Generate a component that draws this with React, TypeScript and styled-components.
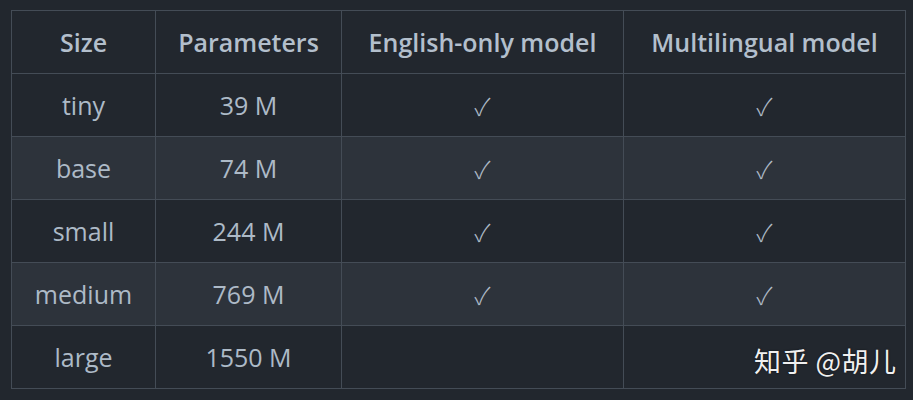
import React from "react";
import styled, { createGlobalStyle } from "styled-components";

const Global = createGlobalStyle`
  html, body { margin: 0; padding: 0; background: #22272e; }
  body { width: 913px; height: 400px; overflow: hidden; }
`;

const Page = styled.div`
  position: relative;
  width: 913px;
  height: 400px;
  box-sizing: border-box;
  padding: 10px 0 0 11px;
  background: #22272e;
  font-family: "Open Sans", "Noto Sans", sans-serif;
`;

const Table = styled.table`
  border-collapse: collapse;
  table-layout: fixed;
  width: 894px;
  color: #adbac7;
  font-size: 25px;
`;

const Row = styled.tr<{ $alt?: boolean }>`
  height: 63px;
  background: ${(p) => (p.$alt ? "#2d333b" : "#22272e")};
`;

const Head = styled.th`
  border: 1px solid #444c56;
  font-weight: 600;
  color: #b3bfcc;
  text-align: center;
  padding: 0 8px;
  white-space: nowrap;
`;

const Cell = styled.td`
  border: 1px solid #444c56;
  text-align: center;
  padding: 0 8px;
  white-space: nowrap;
`;

const Check = styled.span`
  font-family: "Noto Sans CJK SC", sans-serif;
  font-size: 24px;
  font-weight: 300;
  color: #adbac7;
`;

const Watermark = styled.div`
  position: absolute;
  left: 754px;
  top: 341px;
  font-family: "Noto Sans CJK SC", sans-serif;
  font-size: 27px;
  color: #f0f0f0;
  letter-spacing: 0.5px;
  text-shadow: 0 0 2px rgba(0, 0, 0, 0.6);
`;

const rows = [
  { size: "tiny", params: "39 M", en: true, multi: true },
  { size: "base", params: "74 M", en: true, multi: true },
  { size: "small", params: "244 M", en: true, multi: true },
  { size: "medium", params: "769 M", en: true, multi: true },
  { size: "large", params: "1550 M", en: false, multi: false },
];

export default function App() {
  return (
    <Page>
      <Global />
      <Table>
        <colgroup>
          <col style={{ width: 144 }} />
          <col style={{ width: 186 }} />
          <col style={{ width: 282 }} />
          <col style={{ width: 282 }} />
        </colgroup>
        <thead>
          <Row>
            <Head>Size</Head>
            <Head>Parameters</Head>
            <Head>English-only model</Head>
            <Head>Multilingual model</Head>
          </Row>
        </thead>
        <tbody>
          {rows.map((r, i) => (
            <Row key={r.size} $alt={i % 2 === 1}>
              <Cell>{r.size}</Cell>
              <Cell>{r.params}</Cell>
              <Cell>{r.en && <Check>✓</Check>}</Cell>
              <Cell>{r.multi && <Check>✓</Check>}</Cell>
            </Row>
          ))}
        </tbody>
      </Table>
      <Watermark>知乎 @胡儿</Watermark>
    </Page>
  );
}
